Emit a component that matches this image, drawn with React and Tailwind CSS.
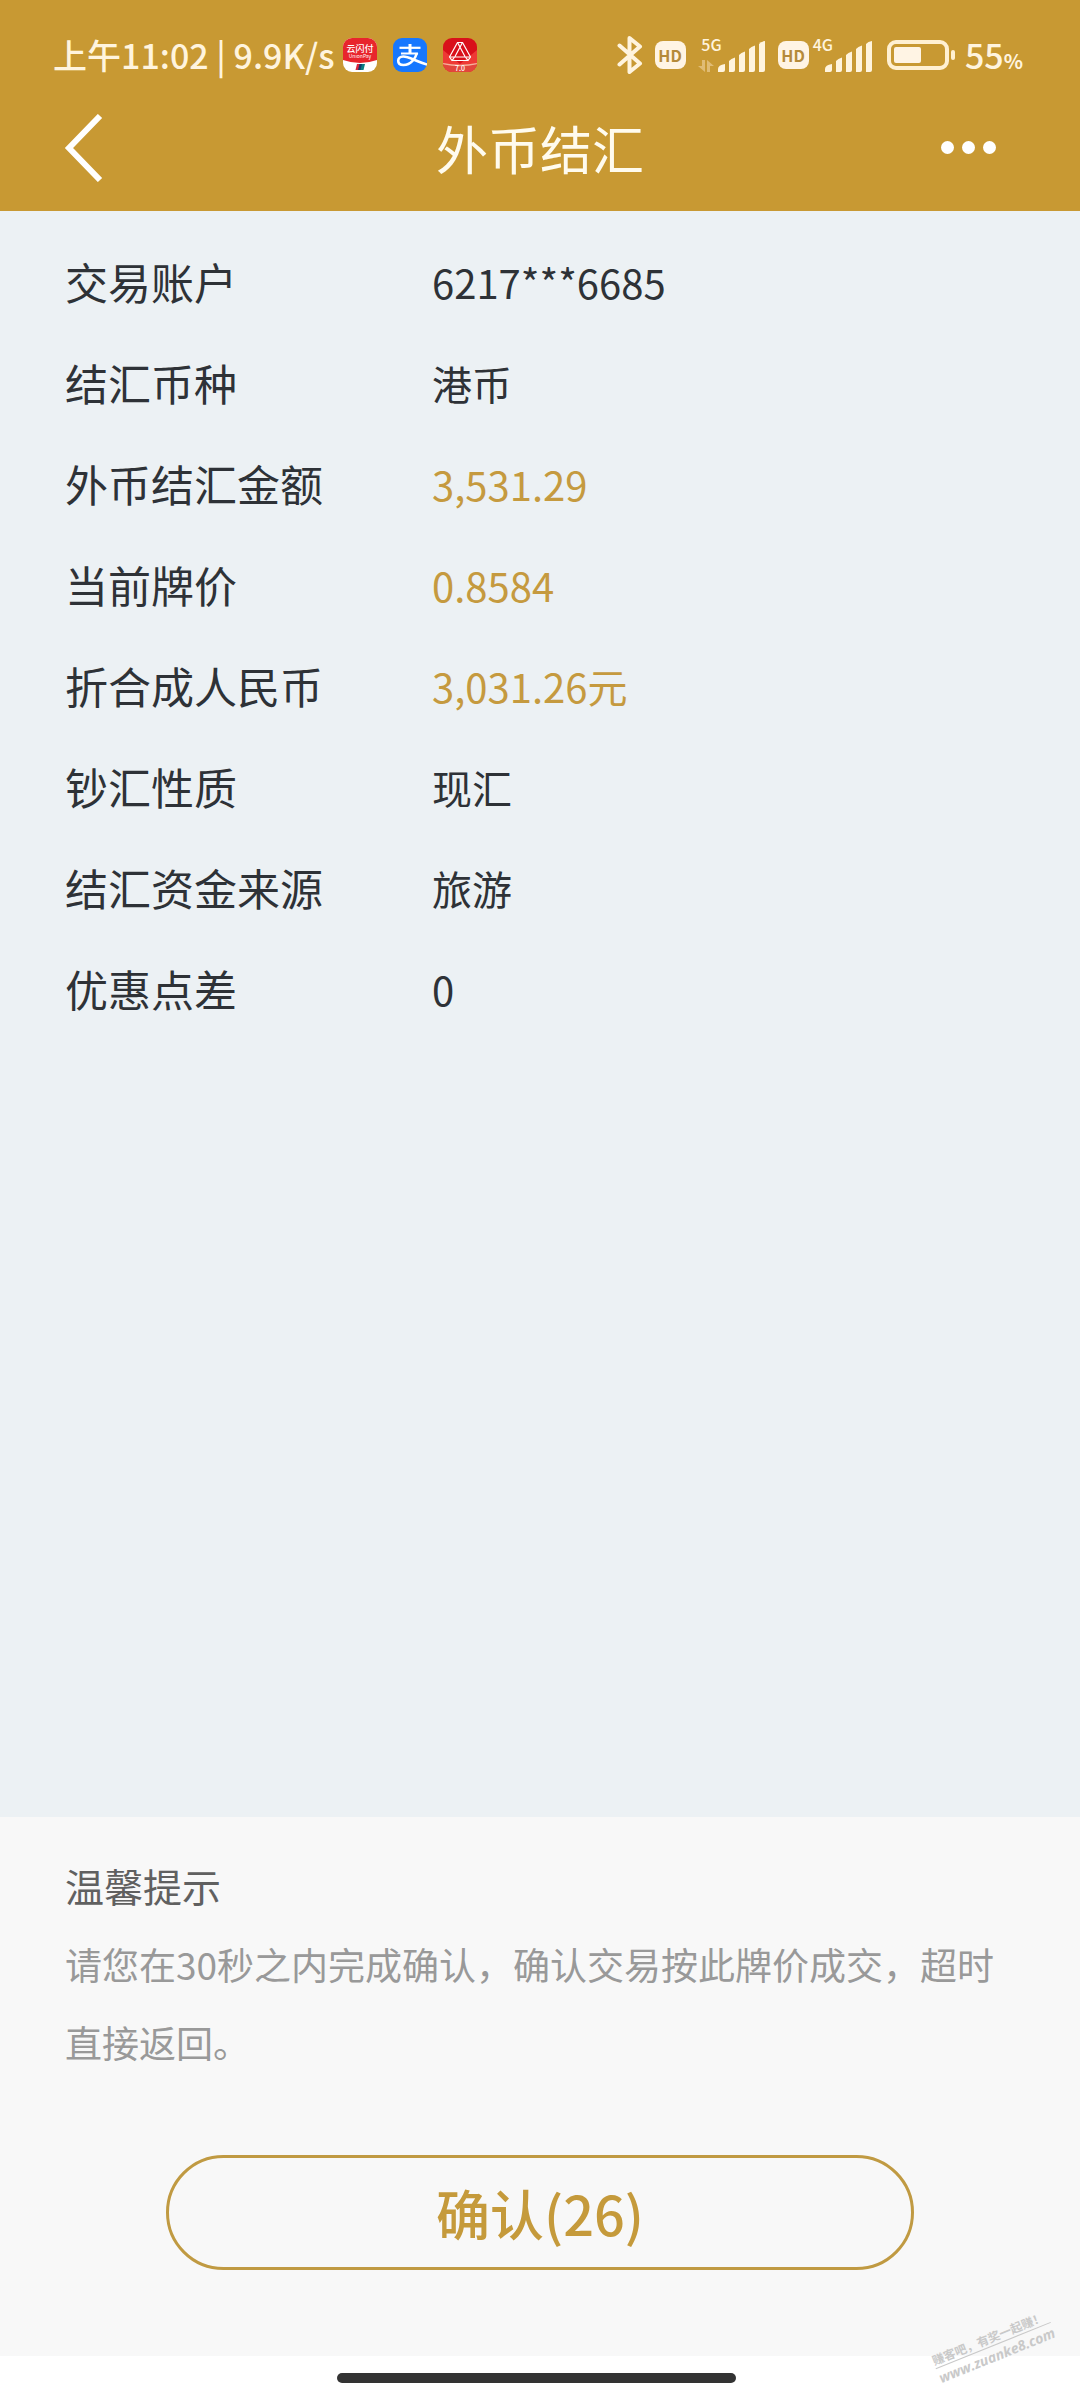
const rows = [
  { label: "交易账户", value: "6217***6685" },
  { label: "结汇币种", value: "港币" },
  { label: "外币结汇金额", value: "3,531.29", gold: true },
  { label: "当前牌价", value: "0.8584", gold: true },
  { label: "折合成人民币", value: "3,031.26元", gold: true },
  { label: "钞汇性质", value: "现汇" },
  { label: "结汇资金来源", value: "旅游" },
  { label: "优惠点差", value: "0" },
];

function UnionPayIcon() {
  return (
    <svg width="34" height="34" viewBox="0 0 34 34" aria-hidden="true">
      <rect width="34" height="34" rx="9" fill="#fff" />
      <path d="M0 22V9a9 9 0 0 1 9-9h16a9 9 0 0 1 9 9v13q-17 6-34 0Z" fill="#e8252c" />
      <text x="17" y="14" fontSize="9" fontWeight="500" fill="#fff" textAnchor="middle">
        云闪付
      </text>
      <text x="17" y="20" fontSize="5" fill="#fff" textAnchor="middle">
        UnionPay
      </text>
      <path d="M14 26h4l-1.500 6h-4Z" fill="#d7263d" />
      <path d="M16.500 26h4l-1.500 6h-4Z" fill="#123a6b" />
      <path d="M19 26h3l-1.500 6h-3Z" fill="#0b7d80" />
    </svg>
  );
}

function AlipayIcon() {
  return (
    <svg width="34" height="34" viewBox="0 0 34 34" aria-hidden="true">
      <rect width="34" height="34" rx="9" fill="#1677ff" />
      <g fill="none" stroke="#fff" strokeLinecap="butt">
        <path d="M17 6v9" strokeWidth="3" />
        <path d="M6.500 9.800h21" strokeWidth="2.200" />
        <path d="M8 15.500h17" strokeWidth="2" />
        <path
          d="M24 15c-1.500 5-6 12-13.500 12C7 27 5.200 25 5.200 22.700c0-2.300 2-4.200 5-4.200C16 18.500 22 23 34 26.500"
          strokeWidth="2.600"
        />
      </g>
    </svg>
  );
}

function BankIcon() {
  return (
    <svg width="34" height="34" viewBox="0 0 34 34" aria-hidden="true">
      <defs>
        <clipPath id="bank-clip">
          <rect width="34" height="34" rx="9" />
        </clipPath>
      </defs>
      <g clipPath="url(#bank-clip)">
        <rect width="34" height="34" fill="#d9101a" />
        <path d="M0 12l17 14L34 12v22H0Z" fill="#ee3a35" />
        <path d="M0 25q17 5 34 0v9H0Z" fill="#e2463c" />
        <path d="M0 25q17 3.500 34 0v1.200q-17 4-34 0Z" fill="#f6b09b" />
      </g>
      <g fill="none" stroke="#fff" strokeWidth="1.200" strokeLinejoin="round">
        <path d="M14.500 4.500h5l8 14.500-2.500 3.500H9L6.500 19Z" />
        <path d="M14.500 4.500 22 18.500M19.500 4.500 12 18.500M6.500 19h21M12 18.500 9 22.500M22 18.500l3 4" />
      </g>
      <text x="17" y="33" fontSize="7" fontWeight="500" fill="#fff" textAnchor="middle">
        7.0
      </text>
    </svg>
  );
}

function BluetoothIcon() {
  return (
    <svg width="26" height="40" viewBox="0 0 26 40" aria-hidden="true">
      <path
        d="M2.500 10.500 23 28.500 12.500 37V3L23 11.500 2.500 29.500"
        fill="none"
        stroke="#fff4de"
        strokeWidth="4"
        strokeLinecap="round"
        strokeLinejoin="round"
      />
    </svg>
  );
}

function HdBadge() {
  return (
    <span className="flex h-7 w-[31px] items-center justify-center rounded-lg bg-[#fff4e4] text-base font-bold text-[#b58a3a]">
      HD
    </span>
  );
}

function SignalBars() {
  return (
    <svg width="48" height="31" viewBox="0 0 48 31" fill="#fff4de" aria-hidden="true">
      <path d="M0 31v-3q0-4 7-5v6q0 2-2 2Z" />
      <path d="M11 31V20q2-2.500 6-3.500V29q0 2-2 2Z" />
      <path d="M21 31V14q2-2.500 6-3.500V29q0 2-2 2Z" />
      <path d="M31 31V8q2-2.500 6-3.500V29q0 2-2 2Z" />
      <path d="M41 31V3q2-2.500 6-3v29q0 2-2 2Z" />
    </svg>
  );
}

function DataArrows() {
  return (
    <svg width="16" height="12" viewBox="0 0 16 12" aria-hidden="true">
      <path d="M4 0h3v12L0 6h4ZM9 12h3V6h4L9 0Z" fill="#e0bc75" />
    </svg>
  );
}

function BatteryIcon() {
  return (
    <svg width="68" height="30" viewBox="0 0 68 30" aria-hidden="true">
      <rect x="2" y="2" width="58" height="26" rx="7" fill="none" stroke="#fff0d2" strokeWidth="4" />
      <rect x="7" y="7" width="27" height="16" rx="2" fill="#fff4e4" />
      <rect x="64" y="10" width="4" height="10" rx="2" fill="#fff0d2" />
    </svg>
  );
}

function StatusBar() {
  return (
    <div className="flex h-[58px] items-center justify-between pr-[57px] pl-[53px] text-[#fff4de]">
      <div className="flex items-center">
        <span className="text-[34px] leading-none font-medium">上午11:02 | 9.9K/s</span>
        <div className="ml-2 flex items-center gap-4">
          <UnionPayIcon />
          <AlipayIcon />
          <BankIcon />
        </div>
      </div>

      <div className="flex items-center">
        <BluetoothIcon />
        <div className="ml-3 flex items-center gap-3">
          <HdBadge />
          <div className="flex h-[34px] items-end">
            <div className="flex h-full flex-col items-end justify-between">
              <span className="-mr-2 text-base leading-3 font-medium">5G</span>
              <DataArrows />
            </div>
            <span className="ml-1">
              <SignalBars />
            </span>
          </div>
          <HdBadge />
        </div>
        <div className="ml-1 flex h-[34px] items-start">
          <span className="-mr-2 text-base leading-3 font-medium">4G</span>
          <span className="self-end">
            <SignalBars />
          </span>
        </div>
        <span className="ml-3.5">
          <BatteryIcon />
        </span>
        <span className="ml-2.5 flex items-baseline text-[34px] leading-none font-medium">
          55<span className="text-xl leading-none font-bold">%</span>
        </span>
      </div>
    </div>
  );
}

function NavBar() {
  return (
    <div className="grid h-[127px] grid-cols-3 items-center px-16 text-white">
      <button type="button" aria-label="返回" className="justify-self-start">
        <svg width="40" height="68" viewBox="0 0 40 68" fill="none" aria-hidden="true">
          <path d="M36 2 5 34l31 32" stroke="#fff" strokeWidth="6" />
        </svg>
      </button>
      <h1 className="text-center text-[52px] leading-none whitespace-nowrap text-[#fffbee]">外币结汇</h1>
      <button type="button" aria-label="更多" className="flex gap-2 justify-self-end pr-5">
        <span className="size-[13px] rounded-full bg-white" />
        <span className="size-[13px] rounded-full bg-white" />
        <span className="size-[13px] rounded-full bg-white" />
      </button>
    </div>
  );
}

export default function App() {
  return (
    <div
      lang="zh-CN"
      className="relative flex min-h-screen flex-col overflow-hidden bg-[#ecf1f4] font-['Noto_Sans_CJK_SC',sans-serif]"
    >
      <header className="bg-[#c89933] pt-[26px]">
        <StatusBar />
        <NavBar />
      </header>

      {/* Transaction details */}
      <main className="flex-1 px-[65px] pt-5">
        <dl>
          {rows.map((row) => (
            <div key={row.label} className="flex h-[101px] items-center">
              <dt className="w-[367px] text-[43px] leading-none text-[#2e3237]">{row.label}</dt>
              <dd
                className={
                  row.gold
                    ? "text-[40px] leading-none text-[#c59a3f]"
                    : "text-[40px] leading-none text-[#2e3237]"
                }
              >
                {row.value}
              </dd>
            </div>
          ))}
        </dl>
      </main>

      {/* Reminder and confirm */}
      <footer className="bg-[#f8f8f8] px-[65px] pt-7 pb-[86px]">
        <h2 className="text-[39px] leading-[80px] text-[#606060]">温馨提示</h2>
        <p className="text-[37px] leading-[78px] text-[#999]">
          请您在30秒之内完成确认，确认交易按此牌价成交，超时直接返回。
        </p>
        <div className="mt-[74px] px-[101px]">
          <button
            type="button"
            className="h-[115px] w-full rounded-full border-3 border-[#c09a42] text-[54px] leading-none font-medium text-[#c59a3b]"
          >
            确认(26)
          </button>
        </div>
      </footer>

      {/* System gesture bar */}
      <div className="flex h-11 items-center justify-center bg-white pr-2">
        <div className="h-[10px] w-[399px] rounded-full bg-[#333]" />
      </div>

      {/* Watermark */}
      <div className="absolute right-6 bottom-[34px] -rotate-[22deg] text-[#c9c9c9]">
        <p className="border-b border-[#c9c9c9] text-xs leading-4 font-bold">赚客吧，有奖一起赚！</p>
        <p className="font-['Open_Sans',sans-serif] text-sm leading-5 font-bold italic">www.zuanke8.com</p>
      </div>
    </div>
  );
}
